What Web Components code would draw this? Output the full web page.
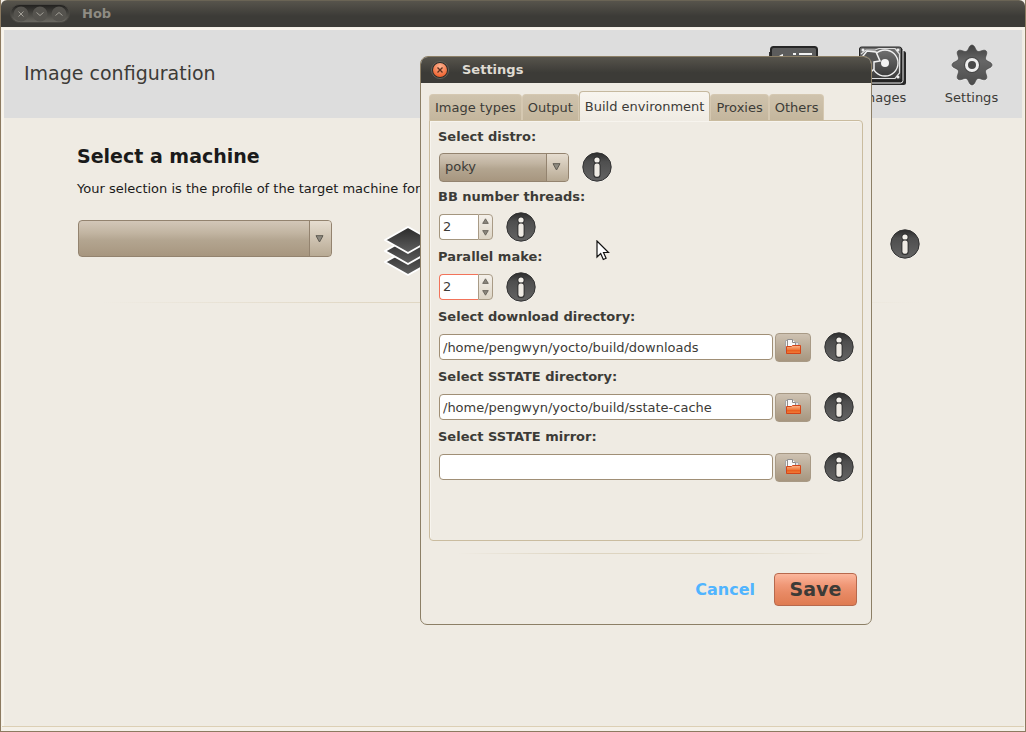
<!DOCTYPE html>
<html lang="en">
<head>
<meta charset="utf-8">
<title>Hob</title>
<style>
  html, body { margin: 0; }
  body { background: #efebe3; color: #3c3b37; font: 13px/18px "DejaVu Sans", sans-serif; }
</style>
</head>
<body>
<hob-window></hob-window>
<script>
const define = (name, html, setup) => {
  const tpl = document.createElement('template');
  tpl.innerHTML = `<style>*, *::before, *::after { box-sizing: border-box; } :host { box-sizing: border-box; } button, input, select { font: inherit; color: inherit; margin: 0; padding: 0; }</style>` + html;
  customElements.define(name, class extends HTMLElement {
    constructor() {
      super();
      this.attachShadow({ mode: 'open' }).append(tpl.content.cloneNode(true));
    }
    connectedCallback() { if (setup) setup(this, this.shadowRoot); }
  });
};

define('info-button', `
<style>
  :host { display: block; flex: none; width: 30px; height: 30px; }
  button { display: block; width: 30px; height: 30px; border: 0; background: none; }
  svg { display: block; }
</style>
<button type="button" aria-label="Information">
  <svg width="30" height="30" viewBox="0 0 30 30">
    <defs><linearGradient id="g" x1="0" y1="0" x2="0" y2="1"><stop offset="0" stop-color="#2c2c2c"/><stop offset=".3" stop-color="#4e4e4e"/><stop offset="1" stop-color="#646464"/></linearGradient></defs>
    <circle cx="15" cy="15.600" r="14.300" fill="#fff" opacity=".8"/>
    <circle cx="15" cy="15" r="14.200" fill="url(#g)" stroke="#333"/>
    <circle cx="15" cy="8" r="3.600" fill="#303030"/><circle cx="15" cy="8" r="2.600" fill="#f3f0ea"/>
    <rect x="11.400" y="10.700" width="7.200" height="15.300" rx="3.300" fill="#303030"/>
    <rect x="12.400" y="11.600" width="5.200" height="13.200" rx="2.200" fill="#efebe4"/>
  </svg>
</button>`);

define('combo-box', `
<style>
  :host { display: block; flex: none; height: var(--h, 29px); }
  .box { display: grid; grid-template-columns: 1fr 23px; height: 100%; }
  select { grid-area: 1 / 1 / 2 / 3; appearance: none; width: 100%; height: 100%; padding: 0 28px 0 5px; border: 1px solid #93836f; border-radius: 4px; background: linear-gradient(#d3c7b8, #c1b4a1 35%, #b3a590 55%, #a7967f); }
  .arrow { grid-area: 1 / 2; margin: 1px 1px 1px 0; border-left: 1px solid #93836f; border-radius: 0 3px 3px 0; background: linear-gradient(#e6ddd0, #b8aa94); pointer-events: none; display: flex; align-items: center; justify-content: center; padding-right: 2px; }
</style>
<div class="box">
  <select></select>
  <span class="arrow"><svg width="9" height="8" viewBox="0 0 9 8"><path d="M1 .7h7L4.500 7z" fill="#8e8a80" stroke="#5d5950"/></svg></span>
</div>`, (el, root) => {
  const s = root.querySelector('select');
  s.setAttribute('aria-label', el.getAttribute('label'));
  s.append(new Option(el.getAttribute('value') || '', el.getAttribute('value') || ''));
});

define('spin-box', `
<style>
  :host { display: flex; flex: none; width: 54px; height: 26px; --edge: #a4967f; }
  :host([focused]) { --edge: #f2735a; }
  input { appearance: textfield; flex: 1; min-width: 0; padding: 0 3px; border: 1px solid var(--edge); border-right: 0; border-radius: 4px 0 0 4px; background: #fff; outline: 0; }
  input::-webkit-inner-spin-button { display: none; }
  .steps { width: 15px; display: flex; flex-direction: column; border: 1px solid #a99b86; border-radius: 0 4px 4px 0; background: linear-gradient(#f4f0ea, #ddd5c6); }
  button { flex: 1; display: flex; align-items: center; justify-content: center; border: 0; background: none; }
</style>
<input type="number">
<span class="steps">
  <button type="button" aria-label="Increase"><svg width="7" height="6" viewBox="0 0 7 6"><path d="M3.500 .8 6.300 5.400H.7z" fill="#8a867c" stroke="#5d5950" stroke-width=".8"/></svg></button>
  <button type="button" aria-label="Decrease"><svg width="7" height="6" viewBox="0 0 7 6"><path d="M3.500 5.200 6.300 .6H.7z" fill="#8a867c" stroke="#5d5950" stroke-width=".8"/></svg></button>
</span>`, (el, root) => {
  const i = root.querySelector('input');
  i.value = el.getAttribute('value');
  i.setAttribute('aria-label', el.getAttribute('label'));
});

define('path-field', `
<style>
  :host { display: flex; flex: 1; align-items: center; gap: 2px; min-width: 0; }
  input { flex: 1; min-width: 0; height: 26px; padding: 0 3px; border: 1px solid #a08f76; border-radius: 4px; background: #fff; outline: 0; }
  button { flex: none; display: flex; align-items: center; justify-content: center; width: 36px; height: 29px; border: 1px solid #a89a86; border-radius: 4px; background: linear-gradient(#cec2b2, #bbad9a 45%, #a7967f); }
</style>
<input type="text">
<button type="button" aria-label="Browse">
  <svg width="16" height="16" viewBox="0 0 16 16">
    <defs><linearGradient id="f" x1="0" y1="0" x2="0" y2="1"><stop offset="0" stop-color="#fbb58c"/><stop offset=".5" stop-color="#f07a3c"/><stop offset=".55" stop-color="#e85a1c"/><stop offset="1" stop-color="#f0803c"/></linearGradient></defs>
    <path d="M.5 1.500h2v12h-2z" fill="#f4f4f4" stroke="#a5a5a5"/>
    <path d="M9.500 3.500h4v5h-4z" fill="#ddd" stroke="#aaa"/>
    <path d="M2.500 .5h5l3 3v9h-8z" fill="#f8f8f8" stroke="#909090"/>
    <path d="M7.500 .5v3h3" fill="#fff" stroke="#888"/>
    <path d="M1.500 7.500h5l1-1h8v8h-14z" fill="url(#f)" stroke="#d2451a"/>
  </svg>
</button>`, (el, root) => {
  const i = root.querySelector('input');
  i.value = el.getAttribute('value') || '';
  i.setAttribute('aria-label', el.getAttribute('label'));
});

define('form-row', `
<style>
  :host { display: block; }
  .label { height: 30px; line-height: 30px; font-weight: bold; }
  .line { display: flex; align-items: center; gap: 13px; height: 30px; padding-left: 1px; }
</style>
<div class="label"></div>
<div class="line"><slot></slot><info-button></info-button></div>`, (el, root) => {
  root.querySelector('.label').textContent = el.getAttribute('label');
});

define('tool-button', `
<style>
  :host { display: block; width: 89px; }
  button { display: flex; flex-direction: column; align-items: center; gap: 3px; width: 100%; padding-top: 3px; border: 0; background: none; }
</style>
<button type="button"><slot name="icon"></slot><slot></slot></button>`);

define('settings-dialog', `
<style>
  :host { display: flex; flex-direction: column; border: 1px solid #8c7f66; border-radius: 8px 8px 7px 7px; background: #efebe3; overflow: hidden; }
  header { display: flex; align-items: center; gap: 13px; height: 26px; padding-left: 10px; background: linear-gradient(#57544c, #3c3b37 60%); color: #dfdbd2; font-weight: bold; }
  header button { width: 18px; height: 18px; border: 0; background: none; }
  header svg { display: block; }
  .tabs { display: flex; align-items: flex-end; height: 37px; padding: 0 8px; }
  .tabs button { height: 26px; padding: 1px 5px 0; border: 1px solid #d5c8b1; border-bottom: 0; border-radius: 4px 4px 0 0; background: linear-gradient(#cfc3ad, #c4b69d); white-space: nowrap; }
  .tabs button[aria-selected="true"] { position: relative; z-index: 1; height: 30px; margin-bottom: -1px; padding: 0 5px; border-color: #c6b99f; background: linear-gradient(#f8f5ef, #efebe3); }
  .panel { flex: 1; margin: 0 8px; padding: 1px 8px 0; border: 1px solid #cabc9f; border-radius: 0 4px 4px 4px; box-shadow: inset 1px 1px #f7f4ee; }
  combo-box { width: 130px; }
  hr { width: 100%; height: 2px; margin: 12px 0 0; border: 0; background: linear-gradient(90deg, transparent 8%, #ddd4c0 35%, #ddd4c0 65%, transparent 92%) 0 0 / 100% 1px no-repeat; }
  footer { display: flex; justify-content: flex-end; align-items: center; gap: 19px; padding: 18px 14px 18px; }
  footer button { height: 33px; font-weight: bold; }
  .cancel { border: 0; background: none; color: #50b4ff; font-size: 16px; }
  .save { width: 83px; padding-bottom: 1px; border: 1px solid #b7694d; border-radius: 4px; background: linear-gradient(#fbb79d, #f09877 35%, #e88a65 60%, #df7b51); font-size: 19px; }
</style>
<header>
  <button type="button" aria-label="Close"><svg width="18" height="18" viewBox="0 0 18 18"><defs><radialGradient id="c" cx=".5" cy=".25" r=".8"><stop offset="0" stop-color="#fbb493"/><stop offset="1" stop-color="#ef5a24"/></radialGradient></defs><circle cx="9" cy="9" r="8.500" fill="#2b2a27" stroke="#66635b"/><circle cx="9" cy="9" r="7" fill="url(#c)"/><path d="m6.500 6.500 5 5m0-5-5 5" stroke="#5b2f1e" stroke-width="1.300"/></svg></button>
  <span>Settings</span>
</header>
<div class="tabs" role="tablist">
  <button type="button" role="tab">Image types</button>
  <button type="button" role="tab">Output</button>
  <button type="button" role="tab" aria-selected="true">Build environment</button>
  <button type="button" role="tab">Proxies</button>
  <button type="button" role="tab">Others</button>
</div>
<div class="panel" role="tabpanel">
  <form-row label="Select distro:"><combo-box label="Select distro" value="poky"></combo-box></form-row>
  <form-row label="BB number threads:"><spin-box label="BB number threads" value="2"></spin-box></form-row>
  <form-row label="Parallel make:"><spin-box label="Parallel make" value="2" focused></spin-box></form-row>
  <form-row label="Select download directory:"><path-field label="Select download directory" value="/home/pengwyn/yocto/build/downloads"></path-field></form-row>
  <form-row label="Select SSTATE directory:"><path-field label="Select SSTATE directory" value="/home/pengwyn/yocto/build/sstate-cache"></path-field></form-row>
  <form-row label="Select SSTATE mirror:"><path-field label="Select SSTATE mirror"></path-field></form-row>
</div>
<hr>
<footer>
  <button type="button" class="cancel">Cancel</button>
  <button type="button" class="save">Save</button>
</footer>`);

const teeth = (() => {
  const p = [];
  for (let i = 0; i < 128; i++) {
    const a = i / 128 * Math.PI * 2;
    const r = 14.8 + 5.2 * Math.pow((1 + Math.cos(a * 8)) / 2, 1.2);
    p.push((22 + r * Math.sin(a)).toFixed(1) + ' ' + (21 - r * Math.cos(a)).toFixed(1));
  }
  return 'M' + p.join('L') + 'z';
})();

define('hob-window', `
<style>
  :host { display: flex; flex-direction: column; position: relative; min-height: 100vh; border: 1px solid #8c7a60; border-top: 0; background: #f4f0e8; }
  .title { display: flex; align-items: center; gap: 12px; height: 27px; padding-left: 9px; background: linear-gradient(#6a6455 0 1px, #57544c 1px, #3c3b37 60%); color: #8f8c83; font-weight: bold; border-radius: 6px 6px 0 0; }
  .controls { display: flex; height: 19px; width: 60px; padding: 0 2px; align-items: center; justify-content: space-between; border-radius: 10px; background: linear-gradient(#22211f, #6a6861); border: 1px solid #4a4843; }
  .controls button { width: 16px; height: 16px; border: 0; background: none; }
  svg { display: block; }
  .body { flex: 1; display: flex; flex-direction: column; margin: 1px 1px 4px; padding: 2px; border: solid #dccfb4; border-width: 0 0 1px; background: #efebe3; box-shadow: inset 2px 2px #f8f4ec; }
  .tools { display: flex; align-items: center; height: 88px; padding: 0 6px 0 20px; background: #ddd; }
  h1 { flex: 1; margin: 0 0 2px; font-size: 19px; line-height: 24px; font-weight: normal; }
  main { padding: 26px 102px 0 73px; color: #1a1a1a; }
  h2 { margin: 0; font-size: 19px; line-height: 24px; }
  p { margin: 12px 0 22px; white-space: nowrap; }
  .machine { display: flex; align-items: flex-start; gap: 52px; padding-left: 1px; }
  .machine combo-box { width: 254px; --h: 37px; }
  .layers { margin-top: 6px; }
  .machine info-button { margin: 9px 0 0 auto; }
  hr { height: 1px; margin: 26px 0 0; border: 0; background: linear-gradient(90deg, transparent 3%, #e0d7c4 35%, #e0d7c4 65%, transparent); }
  settings-dialog { position: absolute; top: 56px; left: calc(50% - 93px); width: 452px; height: 569px; z-index: 2; }
  .pointer { position: absolute; top: 240px; left: calc(50% + 83px); z-index: 3; }
</style>
<div class="title">
  <div class="controls">
    <button type="button" aria-label="Close"><svg width="16" height="16"><circle cx="8" cy="8" r="7.500" fill="#55534e"/><path d="m5.500 5.500 5 5m0-5-5 5" stroke="#a19e96"/></svg></button>
    <button type="button" aria-label="Minimize"><svg width="16" height="16"><circle cx="8" cy="8" r="7.500" fill="#55534e"/><path d="m4.500 6.500 3.500 3 3.500-3" fill="none" stroke="#a19e96"/></svg></button>
    <button type="button" aria-label="Maximize"><svg width="16" height="16"><circle cx="8" cy="8" r="7.500" fill="#55534e"/><path d="m4.500 9.500 3.500-3 3.500 3" fill="none" stroke="#a19e96"/></svg></button>
  </div>
  <span>Hob</span>
</div>
<div class="body">
  <div class="tools">
    <h1>Image configuration</h1>
    <tool-button aria-label="Templates"><svg slot="icon" width="50" height="63" viewBox="0 0 50 63">
      <path d="M-1 8h40v30H-1z" fill="#333"/><rect x="2" y="3" width="46" height="36" rx="2.500" fill="#5c5c5c" stroke="#262626" stroke-width="2"/>
      <path d="M7 20c0-6 3-9 7-10v6c-2 1-3 2-3 4zM24 9h3v2h-3zM30 9h13v2H30z" fill="#f2f2f2"/></svg></tool-button>
    <tool-button><svg slot="icon" width="52" height="42" viewBox="0 0 52 42">
      <defs><linearGradient id="d" x1="0" y1="0" x2="0" y2="1"><stop offset="0" stop-color="#707070"/><stop offset="1" stop-color="#3b3b3b"/></linearGradient></defs>
      <g transform="translate(0 1)">
      <rect x="8" y="6" width="41" height="34" rx="2.500" fill="#282828"/>
      <rect x="2" y="2" width="44" height="36" rx="2.500" fill="#222" stroke="#eee"/>
      <rect x="2.500" y="2" width="42" height="33" rx="2" fill="url(#d)" stroke="#222"/>
      <path d="M4 9 9 5H18L22 3.500H38L42.500 9V28L38 33.500H10" fill="none" stroke="#ddd" stroke-width="1.200"/>
      <circle cx="28" cy="18" r="13" fill="url(#d)" stroke="#f0f0f0" stroke-width="1.300"/>
      <path d="M6 11 10 6 19 7 23 16 17 17 17 24 10 31 6 27z" fill="#555" stroke="#f0f0f0" stroke-width="1.500"/>
      <circle cx="28" cy="18" r="4" fill="#f2f2f2"/>
      <g fill="#eee"><circle cx="6" cy="5" r="1.500"/><circle cx="41" cy="5" r="1.500"/><circle cx="41" cy="32" r="1.500"/><circle cx="6" cy="32" r="1.500"/></g></g></svg>Images</tool-button>
    <tool-button><svg slot="icon" width="44" height="42" viewBox="0 0 44 42">
      <defs><linearGradient id="s" x1="0" y1="0" x2="0" y2="1"><stop offset="0" stop-color="#404040"/><stop offset=".4" stop-color="#666"/><stop offset="1" stop-color="#4c4c4c"/></linearGradient></defs>
      <path d="${teeth}" fill="#f5f5f5" transform="translate(0 1)"/><path d="${teeth}" fill="url(#s)" stroke="#444" stroke-width=".7"/>
      <circle cx="22" cy="21" r="8" fill="#333" opacity=".5"/><circle cx="22" cy="21" r="5.500" fill="#4a4a4a" stroke="#efefef" stroke-width="3"/></svg>Settings</tool-button>
  </div>
  <main>
    <h2>Select a machine</h2>
    <p>Your selection is the profile of the target machine for</p>
    <div class="machine">
      <combo-box label="Machine"></combo-box>
      <svg class="layers" width="48" height="50" viewBox="0 0 48 50">
        <defs><linearGradient id="l" x1="0" y1="0" x2="0" y2="1"><stop offset="0" stop-color="#2a2a2a"/><stop offset="1" stop-color="#606060"/></linearGradient></defs>
        <g fill="url(#l)" stroke="#fff" stroke-width="2" stroke-linejoin="round"><path d="M1 36 24 23 47 36 24 49z"/><path d="M1 25 24 12 47 25 24 38z"/><path d="M1 14 24 1 47 14 24 27z"/></g>
      </svg>
      <info-button></info-button>
    </div>
    <hr>
  </main>
</div>
<settings-dialog role="dialog" aria-label="Settings"></settings-dialog>
<svg class="pointer" width="14" height="21" viewBox="0 0 14 21"><path d="M1 1v16l3.700-3.500 2.600 6 2.800-1.200-2.600-5.800H12.500z" fill="#fff" stroke="#111" stroke-width="1.200"/></svg>`);
</script>
</body>
</html>
